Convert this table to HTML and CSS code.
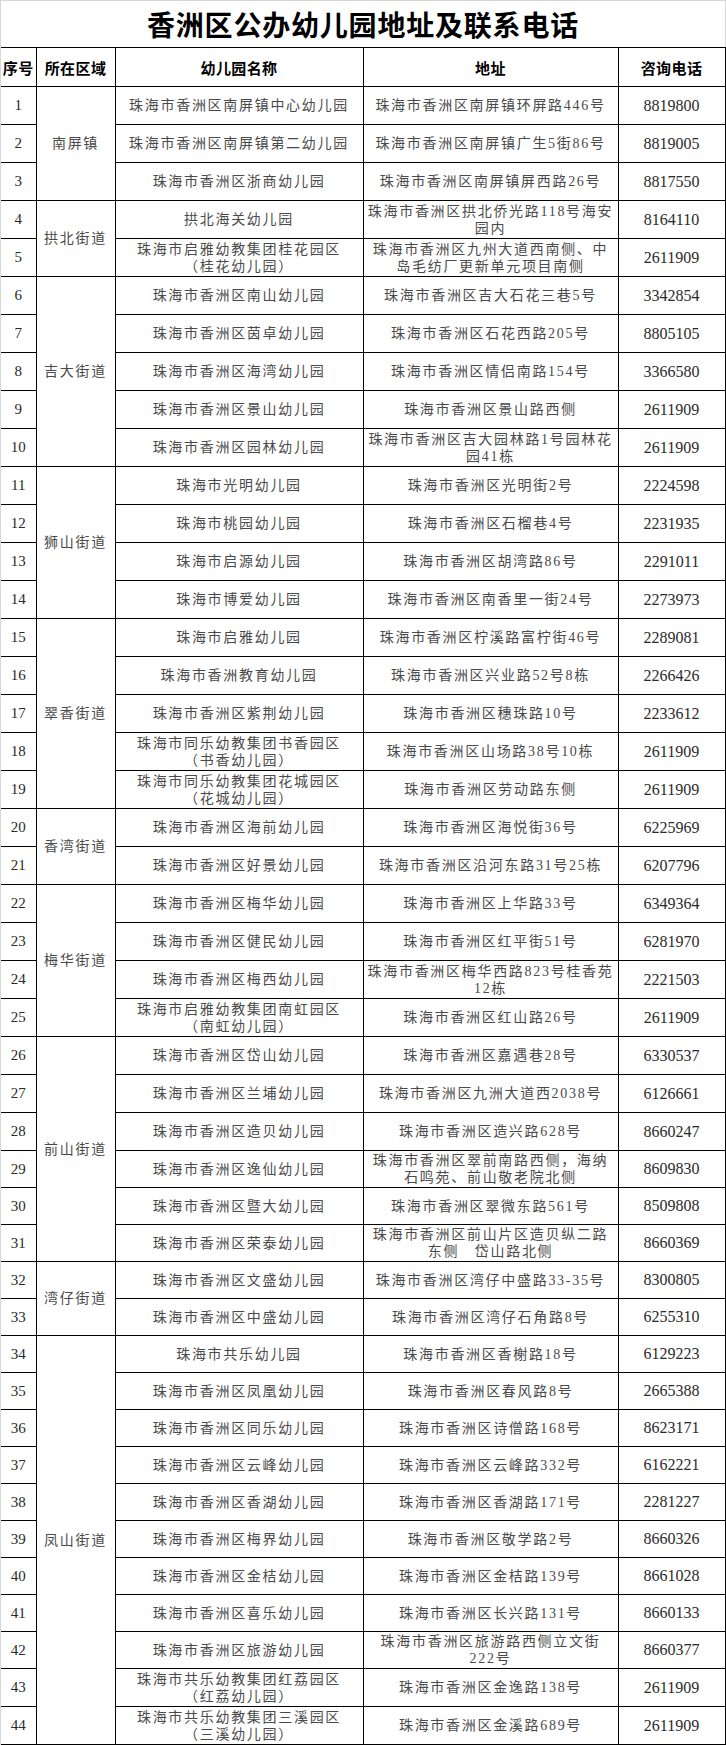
FILE: index.html
```html
<!DOCTYPE html>
<html lang="zh-CN">
<head>
<meta charset="utf-8">
<title>香洲区公办幼儿园地址及联系电话</title>
<link rel="stylesheet" href="styles.css">
</head>
<body>
<div class="sheet">
  <div class="title">香洲区公办幼儿园地址及联系电话</div>
  <table class="grid">
    <colgroup>
      <col class="c-no"><col class="c-area"><col class="c-name"><col class="c-addr"><col class="c-tel">
    </colgroup>
    <thead>
      <tr class="head"><th>序号</th><th>所在区域</th><th>幼儿园名称</th><th>地址</th><th>咨询电话</th></tr>
    </thead>
    <tbody>
      <tr><td class="no">1</td><td class="area" rowspan="3">南屏镇</td><td class="txt">珠海市香洲区南屏镇中心幼儿园</td><td class="txt">珠海市香洲区南屏镇环屏路446号</td><td class="tel">8819800</td></tr>
      <tr><td class="no">2</td><td class="txt">珠海市香洲区南屏镇第二幼儿园</td><td class="txt">珠海市香洲区南屏镇广生5街86号</td><td class="tel">8819005</td></tr>
      <tr><td class="no">3</td><td class="txt">珠海市香洲区浙商幼儿园</td><td class="txt">珠海市香洲区南屏镇屏西路26号</td><td class="tel">8817550</td></tr>
      <tr><td class="no">4</td><td class="area" rowspan="2">拱北街道</td><td class="txt">拱北海关幼儿园</td><td class="txt">珠海市香洲区拱北侨光路118号海安<br>园内</td><td class="tel">8164110</td></tr>
      <tr><td class="no">5</td><td class="txt">珠海市启雅幼教集团桂花园区<br>（桂花幼儿园）</td><td class="txt">珠海市香洲区九州大道西南侧、中<br>岛毛纺厂更新单元项目南侧</td><td class="tel">2611909</td></tr>
      <tr><td class="no">6</td><td class="area" rowspan="5">吉大街道</td><td class="txt">珠海市香洲区南山幼儿园</td><td class="txt">珠海市香洲区吉大石花三巷5号</td><td class="tel">3342854</td></tr>
      <tr><td class="no">7</td><td class="txt">珠海市香洲区茵卓幼儿园</td><td class="txt">珠海市香洲区石花西路205号</td><td class="tel">8805105</td></tr>
      <tr><td class="no">8</td><td class="txt">珠海市香洲区海湾幼儿园</td><td class="txt">珠海市香洲区情侣南路154号</td><td class="tel">3366580</td></tr>
      <tr><td class="no">9</td><td class="txt">珠海市香洲区景山幼儿园</td><td class="txt">珠海市香洲区景山路西侧</td><td class="tel">2611909</td></tr>
      <tr><td class="no">10</td><td class="txt">珠海市香洲区园林幼儿园</td><td class="txt">珠海市香洲区吉大园林路1号园林花<br>园41栋</td><td class="tel">2611909</td></tr>
      <tr><td class="no">11</td><td class="area" rowspan="4">狮山街道</td><td class="txt">珠海市光明幼儿园</td><td class="txt">珠海市香洲区光明街2号</td><td class="tel">2224598</td></tr>
      <tr><td class="no">12</td><td class="txt">珠海市桃园幼儿园</td><td class="txt">珠海市香洲区石榴巷4号</td><td class="tel">2231935</td></tr>
      <tr><td class="no">13</td><td class="txt">珠海市启源幼儿园</td><td class="txt">珠海市香洲区胡湾路86号</td><td class="tel">2291011</td></tr>
      <tr><td class="no">14</td><td class="txt">珠海市博爱幼儿园</td><td class="txt">珠海市香洲区南香里一街24号</td><td class="tel">2273973</td></tr>
      <tr><td class="no">15</td><td class="area" rowspan="5">翠香街道</td><td class="txt">珠海市启雅幼儿园</td><td class="txt">珠海市香洲区柠溪路富柠街46号</td><td class="tel">2289081</td></tr>
      <tr><td class="no">16</td><td class="txt">珠海市香洲教育幼儿园</td><td class="txt">珠海市香洲区兴业路52号8栋</td><td class="tel">2266426</td></tr>
      <tr><td class="no">17</td><td class="txt">珠海市香洲区紫荆幼儿园</td><td class="txt">珠海市香洲区穗珠路10号</td><td class="tel">2233612</td></tr>
      <tr><td class="no">18</td><td class="txt">珠海市同乐幼教集团书香园区<br>（书香幼儿园）</td><td class="txt">珠海市香洲区山场路38号10栋</td><td class="tel">2611909</td></tr>
      <tr><td class="no">19</td><td class="txt">珠海市同乐幼教集团花城园区<br>（花城幼儿园）</td><td class="txt">珠海市香洲区劳动路东侧</td><td class="tel">2611909</td></tr>
      <tr><td class="no">20</td><td class="area" rowspan="2">香湾街道</td><td class="txt">珠海市香洲区海前幼儿园</td><td class="txt">珠海市香洲区海悦街36号</td><td class="tel">6225969</td></tr>
      <tr><td class="no">21</td><td class="txt">珠海市香洲区好景幼儿园</td><td class="txt">珠海市香洲区沿河东路31号25栋</td><td class="tel">6207796</td></tr>
      <tr><td class="no">22</td><td class="area" rowspan="4">梅华街道</td><td class="txt">珠海市香洲区梅华幼儿园</td><td class="txt">珠海市香洲区上华路33号</td><td class="tel">6349364</td></tr>
      <tr><td class="no">23</td><td class="txt">珠海市香洲区健民幼儿园</td><td class="txt">珠海市香洲区红平街51号</td><td class="tel">6281970</td></tr>
      <tr><td class="no">24</td><td class="txt">珠海市香洲区梅西幼儿园</td><td class="txt">珠海市香洲区梅华西路823号桂香苑<br>12栋</td><td class="tel">2221503</td></tr>
      <tr><td class="no">25</td><td class="txt">珠海市启雅幼教集团南虹园区<br>（南虹幼儿园）</td><td class="txt">珠海市香洲区红山路26号</td><td class="tel">2611909</td></tr>
      <tr><td class="no">26</td><td class="area" rowspan="6">前山街道</td><td class="txt">珠海市香洲区岱山幼儿园</td><td class="txt">珠海市香洲区嘉遇巷28号</td><td class="tel">6330537</td></tr>
      <tr><td class="no">27</td><td class="txt">珠海市香洲区兰埔幼儿园</td><td class="txt">珠海市香洲区九洲大道西2038号</td><td class="tel">6126661</td></tr>
      <tr><td class="no">28</td><td class="txt">珠海市香洲区造贝幼儿园</td><td class="txt">珠海市香洲区造兴路628号</td><td class="tel">8660247</td></tr>
      <tr class="s"><td class="no">29</td><td class="txt">珠海市香洲区逸仙幼儿园</td><td class="txt">珠海市香洲区翠前南路西侧，海纳<br>石鸣苑、前山敬老院北侧</td><td class="tel">8609830</td></tr>
      <tr class="s"><td class="no">30</td><td class="txt">珠海市香洲区暨大幼儿园</td><td class="txt">珠海市香洲区翠微东路561号</td><td class="tel">8509808</td></tr>
      <tr class="s"><td class="no">31</td><td class="txt">珠海市香洲区荣泰幼儿园</td><td class="txt">珠海市香洲区前山片区造贝纵二路<br>东侧　岱山路北侧</td><td class="tel">8660369</td></tr>
      <tr class="s"><td class="no">32</td><td class="area" rowspan="2">湾仔街道</td><td class="txt">珠海市香洲区文盛幼儿园</td><td class="txt">珠海市香洲区湾仔中盛路33-35号</td><td class="tel">8300805</td></tr>
      <tr class="s"><td class="no">33</td><td class="txt">珠海市香洲区中盛幼儿园</td><td class="txt">珠海市香洲区湾仔石角路8号</td><td class="tel">6255310</td></tr>
      <tr class="s"><td class="no">34</td><td class="area" rowspan="11">凤山街道</td><td class="txt">珠海市共乐幼儿园</td><td class="txt">珠海市香洲区香榭路18号</td><td class="tel">6129223</td></tr>
      <tr class="s"><td class="no">35</td><td class="txt">珠海市香洲区凤凰幼儿园</td><td class="txt">珠海市香洲区春风路8号</td><td class="tel">2665388</td></tr>
      <tr class="s"><td class="no">36</td><td class="txt">珠海市香洲区同乐幼儿园</td><td class="txt">珠海市香洲区诗僧路168号</td><td class="tel">8623171</td></tr>
      <tr class="s"><td class="no">37</td><td class="txt">珠海市香洲区云峰幼儿园</td><td class="txt">珠海市香洲区云峰路332号</td><td class="tel">6162221</td></tr>
      <tr class="s"><td class="no">38</td><td class="txt">珠海市香洲区香湖幼儿园</td><td class="txt">珠海市香洲区香湖路171号</td><td class="tel">2281227</td></tr>
      <tr class="s"><td class="no">39</td><td class="txt">珠海市香洲区梅界幼儿园</td><td class="txt">珠海市香洲区敬学路2号</td><td class="tel">8660326</td></tr>
      <tr class="s"><td class="no">40</td><td class="txt">珠海市香洲区金桔幼儿园</td><td class="txt">珠海市香洲区金桔路139号</td><td class="tel">8661028</td></tr>
      <tr class="s"><td class="no">41</td><td class="txt">珠海市香洲区喜乐幼儿园</td><td class="txt">珠海市香洲区长兴路131号</td><td class="tel">8660133</td></tr>
      <tr class="s"><td class="no">42</td><td class="txt">珠海市香洲区旅游幼儿园</td><td class="txt">珠海市香洲区旅游路西侧立文街<br>222号</td><td class="tel">8660377</td></tr>
      <tr><td class="no">43</td><td class="txt">珠海市共乐幼教集团红荔园区<br>（红荔幼儿园）</td><td class="txt">珠海市香洲区金逸路138号</td><td class="tel">2611909</td></tr>
      <tr><td class="no">44</td><td class="txt">珠海市共乐幼教集团三溪园区<br>（三溪幼儿园）</td><td class="txt">珠海市香洲区金溪路689号</td><td class="tel">2611909</td></tr>
    </tbody>
  </table>
</div>
</body>
</html>
```
FILE: styles.css
```css
html, body {
  margin: 0;
  padding: 0;
  background: #ffffff;
}

.sheet {
  width: 724px;
  border: 1px solid #d6d6d6;
  border-bottom: none;
}

.title {
  height: 46px;
  display: flex;
  align-items: center;
  justify-content: center;
  font-family: "Noto Sans CJK SC", sans-serif;
  font-weight: 700;
  font-size: 28px;
  letter-spacing: 0.8px;
  color: #000000;
}

.grid {
  width: 724px;
  border-collapse: collapse;
  table-layout: fixed;
  border-left: hidden;
}

.c-no { width: 35px; }
.c-area { width: 79px; }
.c-name { width: 248px; }
.c-addr { width: 255px; }
.c-tel { width: 107px; }

.grid th,
.grid td {
  border: 1px solid #000000;
  padding: 0 1px;
  text-align: center;
  vertical-align: middle;
  white-space: nowrap;
  overflow: hidden;
}

.grid tr { height: 38px; }
.grid tr.head { height: 39px; }
.grid tr.s { height: 37px; }

.grid th {
  font-family: "Noto Sans CJK SC", sans-serif;
  font-weight: 700;
  font-size: 15px;
  color: #000000;
  letter-spacing: 0.4px;
}

.no {
  font-family: "Liberation Serif", serif;
  font-size: 15px;
  color: #2a2a2a;
}

.tel {
  font-family: "Liberation Serif", serif;
  font-size: 16px;
  color: #2a2a2a;
}

.txt,
.area {
  font-family: "Liberation Serif", "Noto Sans CJK SC", sans-serif;
  font-size: 14px;
  line-height: 17px;
  letter-spacing: 1.7px;
  color: #4a4a4a;
}
```
